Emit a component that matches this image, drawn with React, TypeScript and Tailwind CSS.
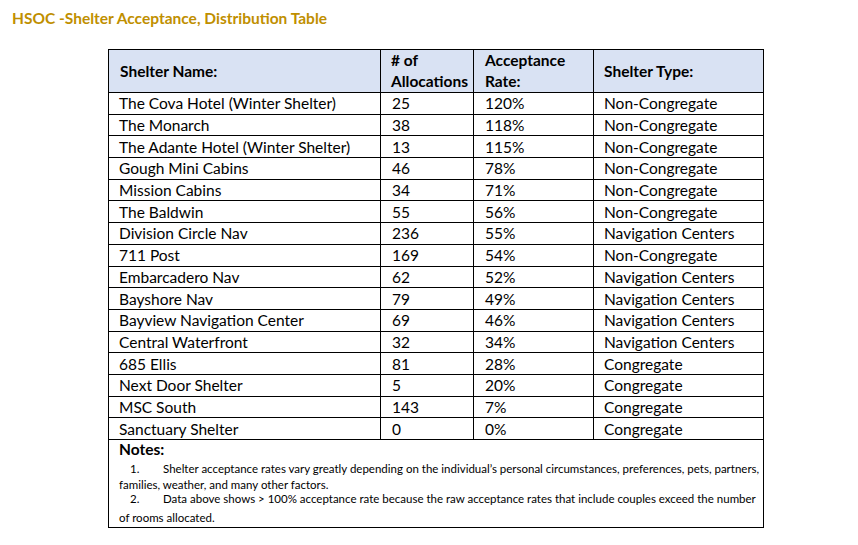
const rows: [string, string, string, string][] = [
  ['The Cova Hotel (Winter Shelter)', '25', '120%', 'Non-Congregate'],
  ['The Monarch', '38', '118%', 'Non-Congregate'],
  ['The Adante Hotel (Winter Shelter)', '13', '115%', 'Non-Congregate'],
  ['Gough Mini Cabins', '46', '78%', 'Non-Congregate'],
  ['Mission Cabins', '34', '71%', 'Non-Congregate'],
  ['The Baldwin', '55', '56%', 'Non-Congregate'],
  ['Division Circle Nav', '236', '55%', 'Navigation Centers'],
  ['711 Post', '169', '54%', 'Non-Congregate'],
  ['Embarcadero Nav', '62', '52%', 'Navigation Centers'],
  ['Bayshore Nav', '79', '49%', 'Navigation Centers'],
  ['Bayview Navigation Center', '69', '46%', 'Navigation Centers'],
  ['Central Waterfront', '32', '34%', 'Navigation Centers'],
  ['685 Ellis', '81', '28%', 'Congregate'],
  ['Next Door Shelter', '5', '20%', 'Congregate'],
  ['MSC South', '143', '7%', 'Congregate'],
  ['Sanctuary Shelter', '0', '0%', 'Congregate'],
]

// the notes wrap exactly where the source document wraps them
const notes = [
  {
    n: '1.',
    first: 'Shelter acceptance rates vary greatly depending on the individual’s personal circumstances, preferences, pets, partners,',
    rest: 'families, weather, and many other factors.',
  },
  {
    n: '2.',
    first: 'Data above shows > 100% acceptance rate because the raw acceptance rates that include couples exceed the number',
    rest: 'of rooms allocated.',
  },
]

export default function App() {
  return (
    <div className="w-[858px] h-[545px] bg-white text-black font-['Lato','Liberation_Sans',sans-serif]">
      <h1 className="pl-3 pt-[9px] text-[15.5px] font-bold leading-[18px] text-[#bf8f00]">
        HSOC -Shelter Acceptance, Distribution Table
      </h1>

      <table className="ml-[108px] mt-[22px] w-[655px] table-fixed border-collapse border border-black">
        <colgroup>
          <col className="w-[272px]" />
          <col className="w-[93px]" />
          <col className="w-[120px]" />
          <col className="w-[170px]" />
        </colgroup>
        <thead>
          <tr className="h-[43px] bg-[#d9e2f3] text-[15.5px] font-bold leading-[21px]">
            <th className="border border-black pl-[11px] text-left align-middle">Shelter Name:</th>
            <th className="border border-black pl-[10px] pr-0 text-left align-middle whitespace-nowrap">
              # of<br />Allocations
            </th>
            <th className="border border-black pl-[11px] text-left align-middle">
              Acceptance<br />Rate:
            </th>
            <th className="border border-black pl-[10px] text-left align-middle">Shelter Type:</th>
          </tr>
        </thead>
        <tbody className="text-[15.5px] leading-[20px]">
          {rows.map(r => (
            <tr key={r[0]} className="h-[21.7px]">
              <td className="border border-black pl-[10px] py-0 whitespace-nowrap">{r[0]}</td>
              <td className="border border-black pl-[11px] py-0">{r[1]}</td>
              <td className="border border-black pl-[11px] py-0">{r[2]}</td>
              <td className="border border-black pl-[10px] py-0 whitespace-nowrap">{r[3]}</td>
            </tr>
          ))}
          <tr>
            <td colSpan={4} className="h-[86px] border border-black pl-[10px] pr-[2px] py-0 align-top">
              <p className="text-[15.5px] font-bold leading-[19px]">Notes:</p>
              <ol className="mt-[2px] text-[11.5px] whitespace-nowrap">
                {notes.map((note, i) => (
                  <li key={note.n} className={i === 0 ? 'leading-[16px]' : 'mt-[-4px] leading-[19px]'}>
                    <div className="flex">
                      <span className="w-[33px] shrink-0 pl-[11px] box-content">{note.n}</span>
                      <span>{note.first}</span>
                    </div>
                    <div>{note.rest}</div>
                  </li>
                ))}
              </ol>
            </td>
          </tr>
        </tbody>
      </table>
    </div>
  )
}
